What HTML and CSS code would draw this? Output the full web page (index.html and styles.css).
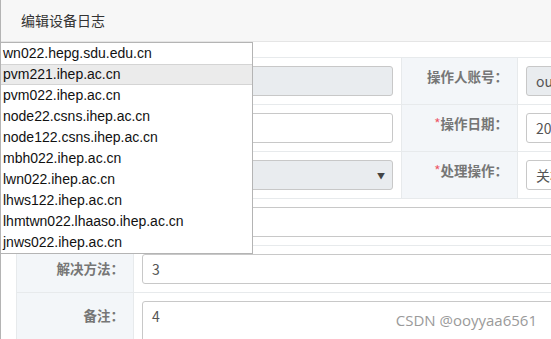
FILE: index.html
```html
<!DOCTYPE html>
<html lang="zh-CN">
<head>
  <meta charset="UTF-8">
  <meta name="viewport" content="width=device-width, initial-scale=1.0">
  <title>编辑设备日志</title>
  <link rel="stylesheet" href="styles.css">
</head>
<body>
  <div class="modal">
    <div class="modal-header">编辑设备日志</div>
    <div class="modal-body">
      <table class="form-table">
        <colgroup>
          <col class="c-label">
          <col class="c-value">
          <col class="c-label2">
          <col class="c-value2">
        </colgroup>
        <tr>
          <th>主机名：</th>
          <td><div class="field disabled"></div></td>
          <th>操作人账号：</th>
          <td><div class="field disabled">ouguoyang</div></td>
        </tr>
        <tr>
          <th><span class="req">*</span>设备名：</th>
          <td><div class="field"></div></td>
          <th><span class="req">*</span>操作日期：</th>
          <td><div class="field">2021-05-20</div></td>
        </tr>
        <tr>
          <th>设备类型：</th>
          <td><div class="field disabled select"><span class="caret">▼</span></div></td>
          <th><span class="req">*</span>处理操作：</th>
          <td><div class="field">关机</div></td>
        </tr>
        <tr>
          <th class="wide">问题描述：</th>
          <td colspan="3"><div class="field"></div></td>
        </tr>
        <tr>
          <th class="wide">解决方法：</th>
          <td colspan="3"><div class="field">3</div></td>
        </tr>
        <tr>
          <th class="wide">备注：</th>
          <td colspan="3"><div class="field tall">4</div></td>
        </tr>
      </table>
    </div>

    <ul class="suggest">
      <li>wn022.hepg.sdu.edu.cn</li>
      <li class="active">pvm221.ihep.ac.cn</li>
      <li>pvm022.ihep.ac.cn</li>
      <li>node22.csns.ihep.ac.cn</li>
      <li>node122.csns.ihep.ac.cn</li>
      <li>mbh022.ihep.ac.cn</li>
      <li>lwn022.ihep.ac.cn</li>
      <li>lhws122.ihep.ac.cn</li>
      <li>lhmtwn022.lhaaso.ihep.ac.cn</li>
      <li>jnws022.ihep.ac.cn</li>
    </ul>

    <div class="watermark">CSDN @ooyyaa6561</div>
  </div>
</body>
</html>
```

FILE: styles.css
```css
*{
  margin: 0;
  padding: 0;
  box-sizing: border-box;
}

html, body{
  width: 551px;
  height: 339px;
  overflow: hidden;
  background: #fff;
}

body{
  font-family: "Noto Sans CJK SC", "Liberation Sans", sans-serif;
  color: #333;
}

.modal{
  position: relative;
  height: 339px;
  border-left: 1px solid #b4b4b4;
}

.modal-header{
  height: 42px;
  line-height: 41px;
  padding-left: 20px;
  font-size: 14px;
  color: #333;
  background: #f7f7f7;
  border-bottom: 1px solid #e5e5e5;
}

.modal-body{
  padding: 15px 0 0 15px;
}

.form-table{
  width: 720px;
  table-layout: fixed;
  border-collapse: collapse;
  border: 1px solid #e7eaec;
}

.c-label{ width: 117px; }
.c-value{ width: 268px; }
.c-label2{ width: 116px; }
.c-value2{ width: 219px; }

.form-table th,
.form-table td{
  border: 1px solid #e7eaec;
  height: 47px;
  vertical-align: top;
}

.form-table th{
  background: #f3f6f9;
  text-align: right;
  font-family: "Noto Sans CJK JP", "Noto Sans CJK SC", sans-serif;
  font-size: 13.5px;
  font-weight: bold;
  line-height: 20px;
  color: #767676;
  padding: 8px 9px 0 0;
}

.form-table th.wide{
  padding-top: 12px;
}

.req{
  color: #ed5565;
  font-weight: normal;
}

.form-table td{
  padding: 8px;
}

.field{
  position: relative;
  height: 30px;
  border: 1px solid #c8c8c8;
  border-radius: 3px;
  background: #fff;
  padding: 0 9px;
  font-size: 14px;
  line-height: 28px;
  color: #555;
  white-space: nowrap;
  overflow: hidden;
}

.field.disabled{
  background: #e9ecef;
}

.field.tall{
  height: 70px;
}

.caret{
  position: absolute;
  right: 7px;
  top: 1px;
  font-size: 8px;
  color: #444;
}

.suggest{
  position: absolute;
  left: -1px;
  top: 42px;
  width: 253px;
  list-style: none;
  background: #fff;
  border: 1px solid #b4b4b4;
  font-family: "Liberation Sans", Arial, sans-serif;
  font-size: 14px;
  color: #111;
}

.suggest li{
  height: 21px;
  line-height: 21px;
  padding-left: 2px;
  white-space: nowrap;
}

.suggest li.active{
  background: #ebebeb;
  box-shadow: inset 0 1px 0 #d4d4d4, inset 0 -1px 0 #d4d4d4;
}

.watermark{
  position: absolute;
  right: 14px;
  bottom: 9px;
  font-family: "Open Sans", sans-serif;
  font-size: 15px;
  color: #9a9a9a;
  text-shadow: 0 0 2px #fff;
}
```
